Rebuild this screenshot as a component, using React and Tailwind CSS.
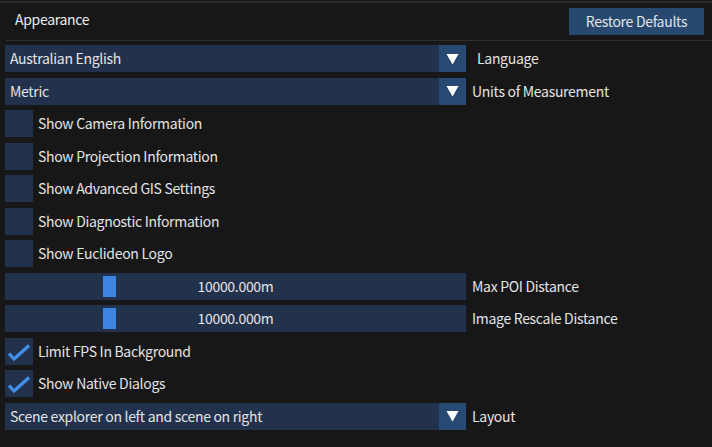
import { useState } from 'react';

const font = { fontFamily: '"Noto Sans CJK JP", "Noto Sans", sans-serif' };

function Arrow() {
    return (
        <div className="w-[27px] h-full bg-[#284a72] flex items-center justify-center shrink-0">
            <svg width="13" height="12" viewBox="0 0 13 12">
                <polygon points="0.5,1 12.5,1 6.5,11.5" fill="#ffffff" />
            </svg>
        </div>
    );
}

function Combo({ value, label, labelClass = 'ml-[6px]' }) {
    return (
        <div className="flex items-center h-[27px]">
            <div className="w-[461px] h-full bg-[#22324d] flex items-center">
                <span className="flex-1 pl-[5px] truncate">{value}</span>
                <Arrow />
            </div>
            <span className={labelClass}>{label}</span>
        </div>
    );
}

function Check({ label, checked, onToggle }) {
    return (
        <div className="flex items-center h-[27px] cursor-pointer" onClick={onToggle}>
            <div className="w-[28px] h-full bg-[#22324d] relative shrink-0">
                {checked && (
                    <svg className="absolute left-0 top-0" width="28" height="27" viewBox="0 0 28 27">
                        <polyline points="4,15.5 9,21 24,7.5" fill="none" stroke="#4090ea" strokeWidth="3.2" />
                    </svg>
                )}
            </div>
            <span className="ml-[5px]">{label}</span>
        </div>
    );
}

function Slider({ value, label }) {
    return (
        <div className="flex items-center h-[27px]">
            <div className="relative w-[461px] h-full bg-[#22324d] flex items-center justify-center">
                <div className="absolute left-[98px] top-[3px] bottom-[3px] w-[13px] bg-[#3d85e0]" />
                <span className="relative">{value}</span>
            </div>
            <span className="ml-[6px]">{label}</span>
        </div>
    );
}

export default function App() {
    const [checks, setChecks] = useState({
        camera: false, projection: false, gis: false, diag: false, logo: false,
        fps: true, dialogs: true,
    });
    const toggle = (k) => setChecks(c => ({ ...c, [k]: !c[k] }));

    return (
        <div className="w-[712px] h-[447px] bg-[#171717] text-[#e4e4e4] text-[14px] tracking-[-0.3px] overflow-hidden" style={font}>
            <div className="h-[2px] mt-[1px] bg-[#2c2c2c]" />
            {/* header */}
            <div className="flex items-center justify-between h-[36px] pl-[15px] pr-[8px]">
                <span className="-mt-[3px] text-[#ececec]">Appearance</span>
                <button className="w-[135px] h-[27px] bg-[#27496f] text-[#e4e4e4] tracking-[-0.3px] mt-[1px]">Restore Defaults</button>
            </div>
            <div className="h-[1px] ml-[6px] mt-[1px] bg-[#2e2e2e]" />

            <div className="flex flex-col gap-[5.5px] pl-[5px] pt-[4px]">
                <Combo value="Australian English" label="Language" labelClass="ml-[11px]" />
                <Combo value="Metric" label="Units of Measurement" />
                <Check label="Show Camera Information" checked={checks.camera} onToggle={() => toggle('camera')} />
                <Check label="Show Projection Information" checked={checks.projection} onToggle={() => toggle('projection')} />
                <Check label="Show Advanced GIS Settings" checked={checks.gis} onToggle={() => toggle('gis')} />
                <Check label="Show Diagnostic Information" checked={checks.diag} onToggle={() => toggle('diag')} />
                <Check label="Show Euclideon Logo" checked={checks.logo} onToggle={() => toggle('logo')} />
                <Slider value="10000.000m" label="Max POI Distance" />
                <Slider value="10000.000m" label="Image Rescale Distance" />
                <Check label="Limit FPS In Background" checked={checks.fps} onToggle={() => toggle('fps')} />
                <Check label="Show Native Dialogs" checked={checks.dialogs} onToggle={() => toggle('dialogs')} />
                <Combo value="Scene explorer on left and scene on right" label="Layout" />
            </div>
        </div>
    );
}
